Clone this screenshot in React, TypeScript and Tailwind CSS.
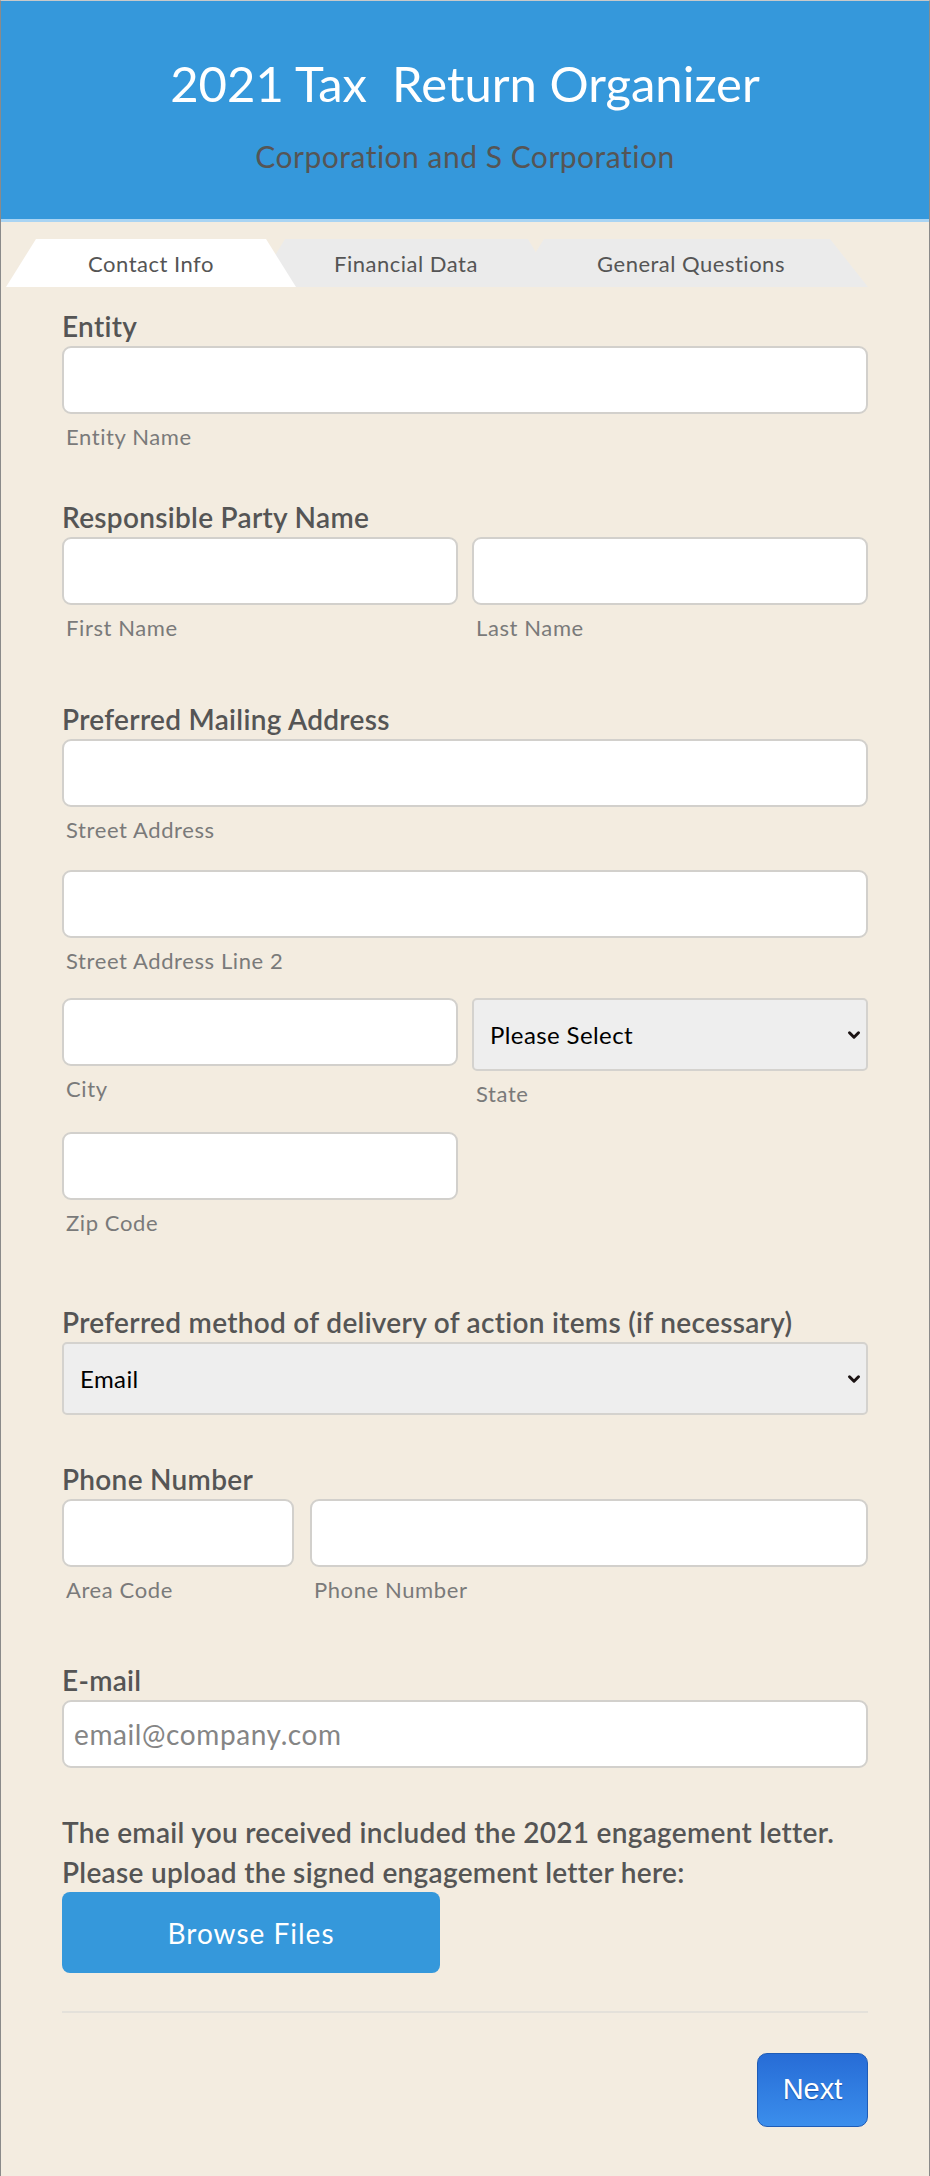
import { ChevronDown } from 'lucide-react';

const font = "font-['Lato','Noto_Sans',sans-serif]";

function Label({ children, className = '' }: { children: React.ReactNode; className?: string }) {
    return (
        <div className={`text-[28px] leading-[32px] font-semibold tracking-[0.3px] text-[#555] mb-[4px] ${className}`}>{children}</div>
    );
}

function Sub({ children }: { children: React.ReactNode }) {
    return <div className="mt-[10px] h-[26px] text-[22px] leading-[26px] tracking-[0.6px] text-[#7a7a7a] pl-[4px]">{children}</div>;
}

function TextInput({ placeholder }: { placeholder?: string }) {
    return (
        <input
            type="text"
            placeholder={placeholder}
            className="block w-full h-[68px] bg-white border-2 border-[#d2d0cc] rounded-[9px] px-[10px] text-[28px] tracking-[0.6px] text-[#333] placeholder:text-[#858585] outline-none"
        />
    );
}

function Select({ value }: { value: string }) {
    return (
        <div className="relative">
            <select
                defaultValue={value}
                className="block w-full h-[73px] appearance-none bg-[#eeeeee] border-2 border-[#d4d2ce] rounded-[5px] pl-[16px] text-[24px] tracking-[0.4px] text-black outline-none"
            >
                <option>{value}</option>
            </select>
            <ChevronDown
                size={18}
                strokeWidth={4}
                className="absolute right-[5px] top-1/2 -translate-y-1/2 text-[#1a1212] pointer-events-none"
            />
        </div>
    );
}

export default function App() {
    return (
        <div className={`w-[930px] bg-[#f3ece0] border border-[#8a8a8a] border-t-[#c9c9c9] ${font}`}>
            {/* Header */}
            <header className="h-[221px] bg-[#3598db] border-b-[3px] border-[#a9d4f3] flex flex-col items-center">
                <h1 className="mt-[52px] text-[49px] leading-[60px] text-white font-normal whitespace-pre">2021 Tax  Return Organizer</h1>
                <p className="mt-[26px] text-[30px] leading-[34px] tracking-[0.5px] text-[#555]">Corporation and S Corporation</p>
            </header>

            {/* Tabs */}
            <div className="flex mt-[17px] h-[48px] text-[22px] tracking-[0.5px] text-[#555]">
                <div className="relative z-[3] ml-[5px] w-[290px] bg-white flex items-center justify-center [clip-path:polygon(30px_0,260px_0,100%_100%,0_100%)]">
                    Contact Info
                </div>
                <div className="relative z-[2] -ml-[40px] w-[300px] bg-[#ebebeb] flex items-center justify-center [clip-path:polygon(29px_0,272px_0,100%_100%,0_100%)]">
                    Financial Data
                </div>
                <div className="relative z-[1] -ml-[42px] w-[354px] bg-[#ebebeb] flex items-center justify-center [clip-path:polygon(30px_0,316px_0,100%_100%,0_100%)]">
                    General Questions
                </div>
            </div>

            {/* Form body */}
            <div className="px-[61px] pb-[49px]">
                <section className="mt-[23px]">
                    <Label>Entity</Label>
                    <TextInput />
                    <Sub>Entity Name</Sub>
                </section>

                <section className="mt-[51px]">
                    <Label>Responsible Party Name</Label>
                    <div className="grid grid-cols-2 gap-[14px]">
                        <div>
                            <TextInput />
                            <Sub>First Name</Sub>
                        </div>
                        <div>
                            <TextInput />
                            <Sub>Last Name</Sub>
                        </div>
                    </div>
                </section>

                <section className="mt-[62px]">
                    <Label>Preferred Mailing Address</Label>
                    <TextInput />
                    <Sub>Street Address</Sub>
                    <div className="mt-[27px]">
                        <TextInput />
                        <Sub>Street Address Line 2</Sub>
                    </div>
                    <div className="mt-[24px] grid grid-cols-2 gap-[14px]">
                        <div>
                            <TextInput />
                            <Sub>City</Sub>
                        </div>
                        <div>
                            <Select value="Please Select" />
                            <Sub>State</Sub>
                        </div>
                    </div>
                    <div className="mt-[25px] grid grid-cols-2 gap-[14px]">
                        <div>
                            <TextInput />
                            <Sub>Zip Code</Sub>
                        </div>
                    </div>
                </section>

                <section className="mt-[70px]">
                    <Label>Preferred method of delivery of action items (if necessary)</Label>
                    <Select value="Email" />
                </section>

                <section className="mt-[48px]">
                    <Label>Phone Number</Label>
                    <div className="grid grid-cols-[232px_1fr] gap-[16px]">
                        <div>
                            <TextInput />
                            <Sub>Area Code</Sub>
                        </div>
                        <div>
                            <TextInput />
                            <Sub>Phone Number</Sub>
                        </div>
                    </div>
                </section>

                <section className="mt-[61px]">
                    <Label>E-mail</Label>
                    <TextInput placeholder="email@company.com" />
                </section>

                <section className="mt-[44px]">
                    <p className="text-[28px] leading-[40px] font-semibold tracking-[0.3px] text-[#555]">
                        The email you received included the 2021 engagement letter.
                        <br />
                        Please upload the signed engagement letter here:
                    </p>
                    <button className="w-[378px] h-[81px] bg-[#3598db] rounded-[8px] text-white text-[28px] tracking-[1px]">
                        Browse Files
                    </button>
                </section>

                <div className="mt-[38px] border-t-2 border-[#e4e1da]"></div>

                <div className="mt-[40px] flex justify-end">
                    <button className="w-[111px] h-[74px] rounded-[10px] border border-[#1f5cb6] bg-gradient-to-b from-[#276cd6] to-[#3b8eec] text-white text-[29px] font-['Liberation_Sans',Arial,sans-serif] [text-shadow:0_1px_1px_rgba(0,40,120,0.6)]">
                        Next
                    </button>
                </div>
            </div>
        </div>
    );
}
